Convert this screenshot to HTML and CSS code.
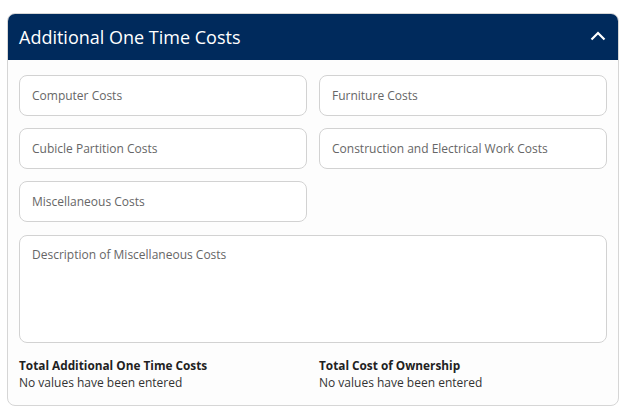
FILE: index.html
```html
<!DOCTYPE html>
<html>
<head>
  <meta charset="utf-8">
  <link rel="stylesheet" href="styles.css">
</head>
<body>
  <div class="card">
    <div class="card-header">
      <h2>Additional One Time Costs</h2>
      <svg class="chevron" width="16" height="10" viewBox="0 0 16 10">
        <path d="M1.5 8.5 L8 2 L14.5 8.5" fill="none" stroke="#fff" stroke-width="2.2"/>
      </svg>
    </div>

    <div class="card-body">
      <div class="fields">
        <input class="field" type="text" placeholder="Computer Costs">
        <input class="field" type="text" placeholder="Furniture Costs">
        <input class="field" type="text" placeholder="Cubicle Partition Costs">
        <input class="field" type="text" placeholder="Construction and Electrical Work Costs">
        <input class="field" type="text" placeholder="Miscellaneous Costs">
      </div>

      <textarea class="field field-area" placeholder="Description of Miscellaneous Costs"></textarea>

      <div class="totals">
        <div class="total">
          <div class="total-label">Total Additional One Time Costs</div>
          <div class="total-value">No values have been entered</div>
        </div>
        <div class="total">
          <div class="total-label">Total Cost of Ownership</div>
          <div class="total-value">No values have been entered</div>
        </div>
      </div>
    </div>
  </div>
</body>
</html>
```

FILE: styles.css
```css
body {
  margin: 0;
  padding: 13px 5px 0 7px;
  font-family: 'Open Sans', sans-serif;
  background: #ffffff;
  color: #333;
}

.card {
  border: 1px solid #d6d6d6;
  border-radius: 8px;
  background: #fdfdfd;
  overflow: hidden;
}

.card-header {
  height: 47px;
  margin: -1px -1px 0 -1px;
  padding: 0 12px 0 12px;
  background: #002a5c;
  display: flex;
  align-items: center;
  justify-content: space-between;
  border-radius: 8px 8px 0 0;
}

.card-header h2 {
  margin: 0;
  font-size: 18px;
  font-weight: 400;
  color: #fff;
}

.chevron {
  margin-right: 1px;
  margin-top: -2px;
}

.card-body {
  padding: 15px 11px 13px 11px;
}

.fields {
  display: grid;
  grid-template-columns: 1fr 1fr;
  gap: 12px;
}

.field {
  box-sizing: border-box;
  height: 41px;
  padding: 0 12px;
  border: 1px solid #d2d2d2;
  border-radius: 8px;
  background: #fff;
  font-family: 'Open Sans', sans-serif;
  font-size: 12px;
  color: #333;
  outline: none;
}

.field::placeholder {
  color: #666;
}

.field-area {
  display: block;
  width: 100%;
  height: 108px;
  margin-top: 13px;
  padding: 10px 12px;
  resize: none;
}

.totals {
  display: grid;
  grid-template-columns: 1fr 1fr;
  gap: 12px;
  margin-top: 13px;
}

.total-label {
  font-size: 11.8px;
  font-weight: 700;
  color: #222;
  line-height: 18px;
}

.total-value {
  font-size: 12px;
  color: #333;
  line-height: 18px;
}
```
